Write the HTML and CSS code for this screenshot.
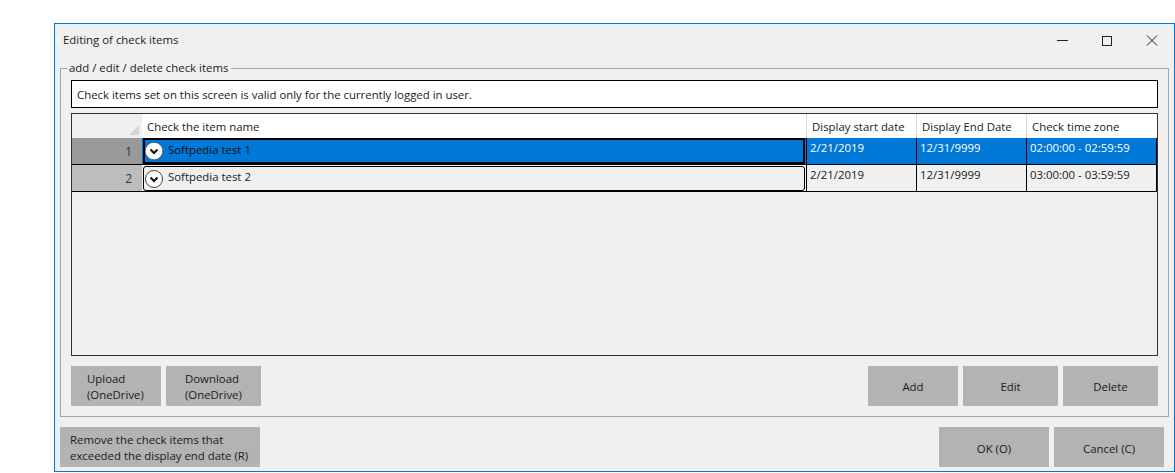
FILE: index.html
```html
<!DOCTYPE html>
<html lang="en">
<head>
<meta charset="utf-8">
<title>Editing of check items</title>
<link rel="stylesheet" href="styles.css">
</head>
<body>
<div class="window">
  <div class="titlebar">
    <span class="title">Editing of check items</span>
    <div class="controls">
      <svg class="ctl" viewBox="0 0 45 20" width="45" height="20"><path d="M17 9.5h11" stroke="#222" fill="none"/></svg>
      <svg class="ctl" viewBox="0 0 45 20" width="45" height="20"><rect x="17.5" y="5.5" width="9" height="9" stroke="#222" fill="none"/></svg>
      <svg class="ctl" viewBox="0 0 45 20" width="45" height="20"><path d="M17 4.5l10 10M27 4.5l-10 10" stroke="#222" fill="none"/></svg>
    </div>
  </div>
  <fieldset class="group">
    <legend class="legend">add / edit / delete check items</legend>
    <div class="notice">Check items set on this screen is valid only for the currently logged in user.</div>
    <div class="grid">
      <div class="row head">
        <div class="rowhead corner"><svg viewBox="0 0 10 10" width="10" height="10" class="sort"><path d="M10 0v10H0z" fill="#d4d4d4"/></svg></div>
        <div class="cell name hcell">Check the item name</div>
        <div class="cell date hcell">Display start date</div>
        <div class="cell date hcell">Display End Date</div>
        <div class="cell zone hcell">Check time zone</div>
      </div>
      <div class="row selected">
        <div class="rowhead dark">1</div>
        <div class="cell name"><div class="namebox boxsel"><svg viewBox="0 0 20 20" width="20" height="20" class="chev"><circle cx="10" cy="10" r="8.8" fill="#fff" stroke="#333" stroke-width=".6"/><path d="M6.5 8.5l3.5 3.5 3.5-3.5" fill="none" stroke="#111" stroke-width="2"/></svg><span class="itemname">Softpedia test 1</span></div></div>
        <div class="cell date val">2/21/2019</div>
        <div class="cell date val">12/31/9999</div>
        <div class="cell zone val">02:00:00 - 02:59:59</div>
      </div>
      <div class="row">
        <div class="rowhead">2</div>
        <div class="cell name"><div class="namebox"><svg viewBox="0 0 20 20" width="20" height="20" class="chev"><circle cx="10" cy="10" r="8.5" fill="#fff" stroke="#444"/><path d="M6.5 8.5l3.5 3.5 3.5-3.5" fill="none" stroke="#111" stroke-width="2"/></svg><span class="itemname">Softpedia test 2</span></div></div>
        <div class="cell date val">2/21/2019</div>
        <div class="cell date val">12/31/9999</div>
        <div class="cell zone val">03:00:00 - 03:59:59</div>
      </div>
    </div>
    <div class="actions">
      <div class="btngroup">
        <button class="btn w90 tall pad16">Upload<br>(OneDrive)</button>
        <button class="btn w95 tall pad19">Download<br>(OneDrive)</button>
      </div>
      <div class="btngroup">
        <button class="btn w90">Add</button>
        <button class="btn w95">Edit</button>
        <button class="btn w95">Delete</button>
      </div>
    </div>
  </fieldset>
  <div class="footer">
    <button class="btn remove">Remove the check items that<br>exceeded the display end date (R)</button>
    <div class="btngroup">
      <button class="btn w110 low">OK (O)</button>
      <button class="btn w110 low">Cancel (C)</button>
    </div>
  </div>
</div>
</body>
</html>
```
FILE: styles.css
```css
* { box-sizing: border-box; }
html, body { margin: 0; height: 100%; background: #fff; overflow: hidden; }
body {
  padding: 23px 0 0 54px;
  font-family: "Open Sans", "Noto Sans", sans-serif;
  font-size: 11.4px;
  color: #1a1a1a;
}
.window {
  height: 449px;
  border: 1px solid #0078d7;
  background: #f0f0f0;
  padding: 0 5px 0 5px;
  display: flex;
  flex-direction: column;
}
.titlebar {
  height: 33px;
  flex: none;
  display: flex;
  align-items: center;
  justify-content: space-between;
  padding-left: 3px;
}
.title { margin-bottom: 2px; }
.controls { display: flex; margin-right: -6px; }
.ctl { display: block; }
.group {
  margin: 4px 0 0 0;
  padding: 0 10px 0 10px;
  border: 1px solid #a6a6a6;
  width: 1109px;
  height: 356px;
  min-width: 0;
  flex: none;
}
.legend { padding: 0 3px 0 2px; margin-left: -4px; line-height: 14px; }
.notice {
  margin-top: 5px;
  height: 28px;
  border: 1px solid #000;
  background: #fff;
  padding-left: 5px;
  display: flex;
  align-items: center;
}
.grid {
  margin-top: 5px;
  height: 243px;
  border: 1px solid #333;
}
.row {
  display: flex;
  height: 27px;
  border-bottom: 1px solid #000;
}
.head { height: 24px; border-bottom: 0; }
.rowhead {
  width: 70px;
  flex: none;
  background: #bdbdbd;
  color: #333;
  text-align: right;
  padding: 5px 10px 0 0;
  font-size: 12px;
}
.dark { background: #999; }
.corner { background: #f0f0f0; position: relative; padding: 0; }
.sort { position: absolute; right: 3px; bottom: 3px; }
.cell { flex: none; border-right: 1px solid #000; }
.name { width: 665px; padding: 0 1px; }
.date { width: 110px; }
.zone { width: 130px; }
.hcell {
  background: #fff;
  border-right: 1px solid #d8d8d8;
  padding: 5px 0 0 5px;
}
.head .name { padding-left: 5px; }
.val { padding: 2px 0 0 3px; }
.head .zone { border-right: 0; }
.selected .cell { background: #0078d7; color: #fff; }
.namebox {
  height: 25px;
  margin-top: 1px;
  border: 1px solid #000;
  border-radius: 3px;
  display: flex;
  align-items: center;
  padding-left: 1px;
  gap: 4px;
}
.boxsel { border: 2px solid #000; border-radius: 0; margin-top: 0; height: 26px; padding-left: 0; color: #111; }
.chev { flex: none; margin-left: -1px; }
.itemname { margin-bottom: 4px; }
.actions {
  margin-top: 10px;
  display: flex;
  justify-content: space-between;
}
.btngroup { display: flex; gap: 5px; }
.btn {
  height: 40px;
  border: 0;
  background: #b3b3b3;
  color: #1a1a1a;
  font: inherit;
  padding: 0;
}
.tall { line-height: 16px; text-align: left; padding-top: 2px; }
.pad16 { padding-left: 16px; }
.pad19 { padding-left: 19px; }
.low { padding-top: 2px; }
.w90 { width: 90px; }
.w95 { width: 95px; }
.w110 { width: 110px; }
.footer {
  margin-top: 10px;
  display: flex;
  justify-content: space-between;
  padding-right: 5px;
}
.remove { width: 200px; text-align: left; padding: 2px 0 0 10px; line-height: 16px; }
```
